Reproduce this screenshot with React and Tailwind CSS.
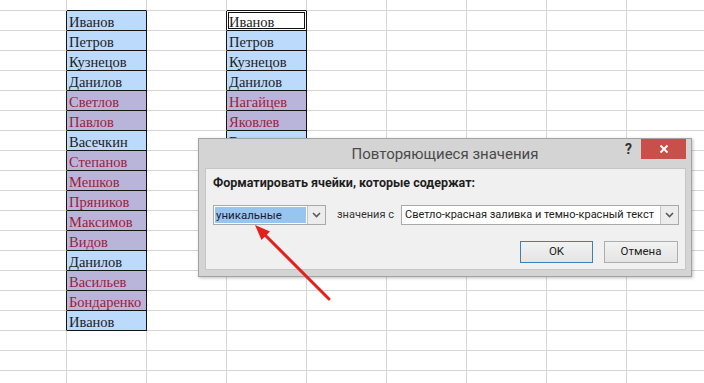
import React from "react";

const leftNames = [
  ["Иванов", "b"],
  ["Петров", "b"],
  ["Кузнецов", "b"],
  ["Данилов", "b"],
  ["Светлов", "r"],
  ["Павлов", "r"],
  ["Васечкин", "b"],
  ["Степанов", "r"],
  ["Мешков", "r"],
  ["Пряников", "r"],
  ["Максимов", "r"],
  ["Видов", "r"],
  ["Данилов", "b"],
  ["Васильев", "r"],
  ["Бондаренко", "r"],
  ["Иванов", "b"],
];

const rightNames = [
  ["Иванов", "w"],
  ["Петров", "b"],
  ["Кузнецов", "b"],
  ["Данилов", "b"],
  ["Нагайцев", "r"],
  ["Яковлев", "r"],
  ["Васечкин", "b"],
];

const ROWS = 20;
const COLS = 9;

function cellData(r, c) {
  if (c === 1 && r >= 1 && r <= leftNames.length) return leftNames[r - 1];
  if (c === 3 && r >= 1 && r <= rightNames.length) return rightNames[r - 1];
  return null;
}

function Cell({ r, c }) {
  const d = cellData(r, c);
  const blackRight = d || cellData(r, c + 1);
  const blackBottom = d || cellData(r + 1, c);
  let fill = "";
  if (d && d[1] === "b") fill = "bg-[#bcdafb] text-[#1c1c24]";
  if (d && d[1] === "r") fill = "bg-[#b9b4da] text-[#9e1b3b]";
  if (d && d[1] === "w") fill = "bg-white text-[#1c1c24] shadow-[inset_0_0_0_1px_#fff,inset_0_0_0_2px_#111]";
  return (
    <div
      className={
        "shrink-0 border-r border-b pl-[2px] whitespace-nowrap text-[14.5px] leading-[22px] " +
        (c === 0 ? "w-[67px] " : "w-[80px] ") +
        (r === 0 ? "h-[11px] " : "h-[20px] ") +
        (blackRight ? "border-r-[#141414] " : "border-r-[#d6d6d6] ") +
        (blackBottom ? "border-b-[#141414] " : "border-b-[#d6d6d6] ") +
        fill
      }
    >
      {d ? d[0] : null}
    </div>
  );
}

function Chevron() {
  return (
    <svg width="9" height="6" viewBox="0 0 9 6">
      <polyline points="1,1 4.5,4.5 8,1" fill="none" stroke="#5a5a5a" strokeWidth="1.6" />
    </svg>
  );
}

function DropButton() {
  return (
    <div className="w-[18px] h-full border-l border-[#c4c4c4] bg-[#ececec] flex items-center justify-center shrink-0">
      <Chevron />
    </div>
  );
}

function Dialog() {
  return (
    <div className="absolute left-[198px] top-[138px] w-[494px] h-[139px] bg-[#d4d4d4] border border-[#a3a3a3] shadow-[1px_1px_3px_rgba(0,0,0,0.25)] flex flex-col font-['Roboto',sans-serif]">
      {/* title bar */}
      <div className="h-[29px] shrink-0 grid grid-cols-[1fr_auto_1fr]">
        <div />
        <div className="flex items-center text-[15px] text-[#4a4a4a] pt-[1px] whitespace-nowrap">Повторяющиеся значения</div>
        <div className="flex justify-end items-start pr-[5px]">
          <span className="mt-[2px] mr-[9px] text-[14px] font-bold text-[#333] leading-[16px]">?</span>
          <div className="w-[45px] h-[20px] bg-[#c9504a] flex items-center justify-center">
            <svg width="10" height="10" viewBox="0 0 10 10">
              <path d="M1.5 1.5 L8.5 8.5 M8.5 1.5 L1.5 8.5" stroke="#fff" strokeWidth="1.8" />
            </svg>
          </div>
        </div>
      </div>

      {/* body */}
      <div className="flex-1 ml-[6px] mr-[5px] mb-[6px] bg-[#f0f0f0] border border-[#c6c6c6] pl-[7px] pr-[6px] pt-[6px] flex flex-col">
        <div className="text-[12.5px] font-bold text-[#1e1e1e] leading-[16px] whitespace-nowrap">
          Форматировать ячейки, которые содержат:
        </div>

        <div className="mt-[14px] flex items-center h-[20px]">
          <div className="w-[113px] h-[20px] border border-[#a9a9a9] bg-white flex shrink-0">
            <div className="flex-1 m-[1px] bg-[#97c5f0] text-[11.5px] leading-[16px] text-[#1a1a33] pl-[1px] whitespace-nowrap">уникальные</div>
            <DropButton />
          </div>
          <span className="ml-[11px] text-[11px] text-[#333] leading-[16px] whitespace-nowrap shrink-0">значения с</span>
          <div className="ml-auto w-[278px] h-[20px] border border-[#a9a9a9] bg-white flex shrink-0">
            <div className="flex-1 pl-[3px] text-[11px] leading-[18px] text-[#222] whitespace-nowrap overflow-hidden">
              Светло-красная заливка и темно-красный текст
            </div>
            <DropButton />
          </div>
        </div>

        <div className="mt-[16px] flex justify-end gap-[11px] pr-[1px]">
          <button className="w-[73px] h-[22px] border border-[#3d80b4] bg-gradient-to-b from-[#f2f2f2] to-[#e4e4e4] text-[11.5px] text-[#222]">
            OK
          </button>
          <button className="w-[74px] h-[22px] border border-[#adadad] bg-gradient-to-b from-[#f2f2f2] to-[#e4e4e4] text-[11.5px] text-[#222]">
            Отмена
          </button>
        </div>
      </div>
    </div>
  );
}

function Arrow() {
  return (
    <svg className="absolute inset-0 pointer-events-none" width="704" height="383" viewBox="0 0 704 383">
      <line x1="329" y1="299" x2="265" y2="235" stroke="#e0211d" strokeWidth="3" strokeLinecap="round" />
      <polygon points="255,225 261.5,240 270,231.5" fill="#e0211d" />
    </svg>
  );
}

export default function App() {
  return (
    <div className="relative w-[704px] h-[383px] overflow-hidden bg-white font-['Liberation_Serif',serif]">
      {Array.from({ length: ROWS }).map((_, r) => (
        <div key={r} className="flex">
          {Array.from({ length: COLS }).map((_, c) => (
            <Cell key={c} r={r} c={c} />
          ))}
        </div>
      ))}
      <Dialog />
      <Arrow />
    </div>
  );
}
